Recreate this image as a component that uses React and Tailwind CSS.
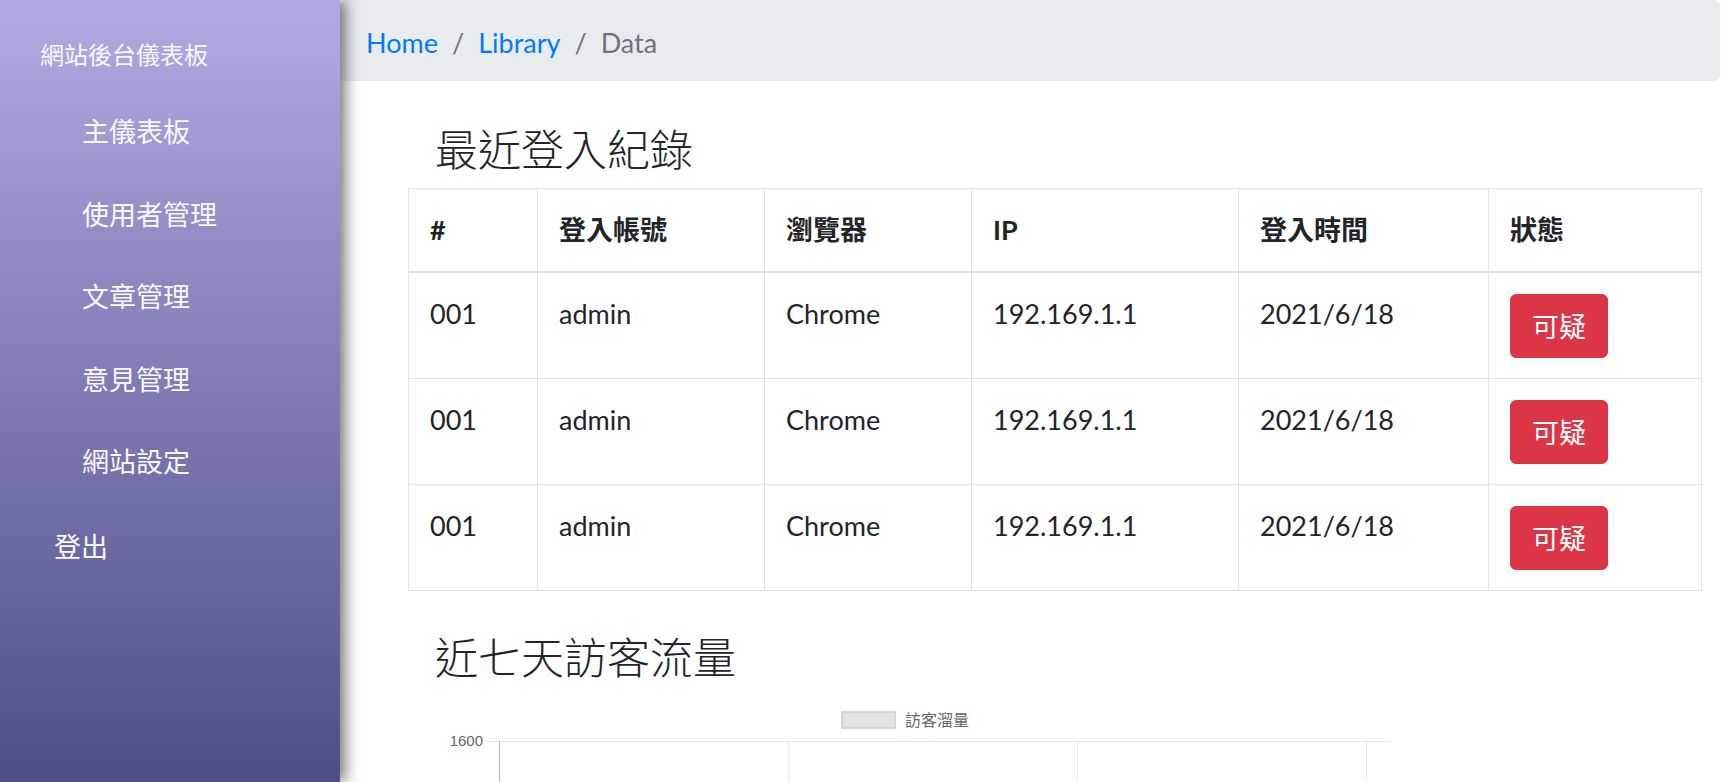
import React from "react";

const rows = [1, 2, 3];

function Chart() {
  return (
    <svg width="970" height="100" viewBox="0 0 970 100" className="block">
      <rect x="422" y="11" width="53" height="16" fill="#e3e3e3" stroke="#d5d5d5" strokeWidth="2" />
      <text x="485" y="25" fontSize="16" fill="#666" fontFamily="'Noto Sans CJK TC', sans-serif">訪客溜量</text>
      <text x="63" y="45" fontSize="15" fill="#666" textAnchor="end" fontFamily="'Liberation Sans', sans-serif">1600</text>
      <line x1="64" y1="40.5" x2="970" y2="40.5" stroke="#e6e6e6" strokeWidth="1" />
      <line x1="79.5" y1="40" x2="79.5" y2="100" stroke="#b5b5b5" strokeWidth="1" />
      <line x1="368.5" y1="40" x2="368.5" y2="100" stroke="#e6e6e6" strokeWidth="1" />
      <line x1="657.5" y1="40" x2="657.5" y2="100" stroke="#e6e6e6" strokeWidth="1" />
      <line x1="946.5" y1="40" x2="946.5" y2="100" stroke="#e6e6e6" strokeWidth="1" />
    </svg>
  );
}

export default function App() {
  const th = "border border-[#dee2e6] border-b-2 px-[21px] py-[21px] text-left font-bold leading-[40px] align-bottom";
  const td = "border border-[#dee2e6] px-[21px] py-[20.5px] leading-[40px] align-top";
  return (
    <div className="flex h-screen overflow-hidden bg-white">
      <aside className="relative z-10 h-full w-[340px] shrink-0 bg-linear-to-b from-[#b3aae3] to-[#4e4f86] text-[#f8f8fc] shadow-[5px_0_14px_rgba(0,0,0,0.55)] font-['Noto_Sans_CJK_TC',sans-serif]">
        <div className="pl-[40px] pt-[39px] text-[24px] leading-[30px]">網站後台儀表板</div>
        <ul className="mt-[21px] text-[27px]">
          {["主儀表板", "使用者管理", "文章管理", "意見管理", "網站設定"].map((t) => (
            <li key={t} className="flex h-[82.5px] items-center pl-[82px]">{t}</li>
          ))}
        </ul>
        <div className="mt-[2px] flex h-[82.5px] items-center pl-[54px] text-[27px]">登出</div>
      </aside>
      <main className="min-w-0 flex-1 font-['Lato','Noto_Sans_CJK_TC',sans-serif] text-[#212529]">
        <nav className="mr-[2px] flex h-[81px] items-center rounded-[6px] bg-[#e9ecef] pl-[26px] pt-[4px] text-[27px] leading-[40px]">
          <span className="text-[#007bff]">Home</span>
          <span className="px-[14px] text-[#6c757d]">/</span>
          <span className="text-[#007bff]">Library</span>
          <span className="px-[14px] text-[#6c757d]">/</span>
          <span className="text-[#6c757d]">Data</span>
        </nav>
        <h2 className="ml-[95px] mt-[40px] text-[43px] font-light leading-[52px] font-['Noto_Sans_CJK_TC',sans-serif]">最近登入紀錄</h2>
        <table className="ml-[68px] mt-[15px] w-[1293px] table-fixed border-collapse text-[27px]">
          <colgroup>
            <col className="w-[129px]" />
            <col className="w-[227px]" />
            <col className="w-[207px]" />
            <col className="w-[267px]" />
            <col className="w-[250px]" />
            <col className="w-[213px]" />
          </colgroup>
          <thead>
            <tr>
              <th className={th}>#</th>
              <th className={th}>登入帳號</th>
              <th className={th}>瀏覽器</th>
              <th className={th}>IP</th>
              <th className={th}>登入時間</th>
              <th className={th}>狀態</th>
            </tr>
          </thead>
          <tbody>
            {rows.map((r) => (
              <tr key={r}>
                <td className={td}>001</td>
                <td className={td}>admin</td>
                <td className={td}>Chrome</td>
                <td className={td}>192.169.1.1</td>
                <td className={td}>2021/6/18</td>
                <td className={td}>
                  <span className="inline-block h-[64px] rounded-[6px] border border-[#dc3545] bg-[#dc3545] px-[21px] py-[11px] text-white leading-[40px] font-['Noto_Sans_CJK_TC',sans-serif]">可疑</span>
                </td>
              </tr>
            ))}
          </tbody>
        </table>
        <h2 className="ml-[95px] mt-[38px] text-[43px] font-light leading-[52px] font-['Noto_Sans_CJK_TC',sans-serif]">近七天訪客流量</h2>
        <div className="ml-[80px] mt-[20px]">
          <Chart />
        </div>
      </main>
    </div>
  );
}
